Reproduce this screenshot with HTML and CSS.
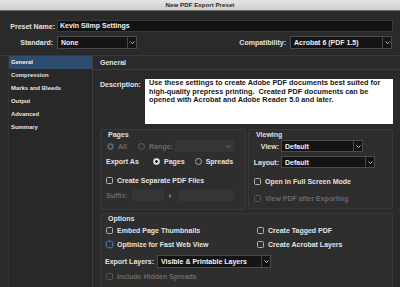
FILE: index.html
```html
<!DOCTYPE html>
<html>
<head>
<meta charset="utf-8">
<title>New PDF Export Preset</title>
<link rel="stylesheet" href="styles.css">
</head>
<body>
<div class="titlebar">New PDF Export Preset</div>
<div class="row preset-row">
  <span class="lbl-left">Preset Name:</span>
  <div class="input">Kevin Slimp Settings</div>
</div>
<div class="row std-row">
  <span class="lbl-left std">Standard:</span>
  <div class="select w-standard"><span class="val">None</span><span class="chev"><svg width="5" height="3" viewBox="0 0 5 3"><path d="M0.5 0.5 L2.5 2.5 L4.5 0.5" fill="none" stroke="#cfcfcf" stroke-width="0.9"/></svg></span></div>
  <div class="spacer"></div>
  <span class="lbl-compat">Compatibility:</span>
  <div class="select w-compat"><span class="val">Acrobat 6 (PDF 1.5)</span><span class="chev"><svg width="5" height="3" viewBox="0 0 5 3"><path d="M0.5 0.5 L2.5 2.5 L4.5 0.5" fill="none" stroke="#cfcfcf" stroke-width="0.9"/></svg></span></div>
</div>
<div class="body">
  <ul class="sidebar">
    <li class="active">General</li>
    <li>Compression</li>
    <li>Marks and Bleeds</li>
    <li>Output</li>
    <li>Advanced</li>
    <li>Summary</li>
  </ul>
  <div class="panel">
    <div class="panel-head">General</div>
    <div class="panel-content">
      <div class="desc-row">
        <span class="desc-lbl">Description:</span>
        <div class="textarea">Use these settings to create Adobe PDF documents best suited for<br>high-quality prepress printing.&nbsp; Created PDF documents can be<br>opened with Acrobat and Adobe Reader 5.0 and later.</div>
      </div>
      <div class="groups">
        <div class="group pages">
          <div class="legend">Pages</div>
          <div class="row r-range">
            <span class="radio dis on"></span><span class="opt dis">All</span>
            <span class="radio dis gap-range"></span><span class="opt dis">Range:</span>
            <div class="select dis w-range"><span class="val"></span><span class="chev"><svg width="5" height="3" viewBox="0 0 5 3"><path d="M0.5 0.5 L2.5 2.5 L4.5 0.5" fill="none" stroke="#7a7a7a" stroke-width="0.9"/></svg></span></div>
          </div>
          <div class="row r-export">
            <span class="export-lbl">Export As</span>
            <span class="radio on"></span><span class="opt">Pages</span>
            <span class="radio gap-spreads"></span><span class="opt">Spreads</span>
          </div>
          <div class="row r-check r-create">
            <span class="check"></span><span class="opt">Create Separate PDF Files</span>
          </div>
          <div class="row r-suffix">
            <span class="suffix-lbl dis">Suffix:</span>
            <div class="dis-input w-suf1"></div>
            <svg class="arrow" width="3" height="4" viewBox="0 0 3 4"><path d="M0 0 L3 2 L0 4 Z" fill="#777"/></svg>
            <div class="dis-input w-suf2"></div>
          </div>
        </div>
        <div class="group viewing">
          <div class="legend">Viewing</div>
          <div class="row r-view">
            <span class="view-lbl">View:</span>
            <div class="select w-view"><span class="val">Default</span><span class="chev"><svg width="5" height="3" viewBox="0 0 5 3"><path d="M0.5 0.5 L2.5 2.5 L4.5 0.5" fill="none" stroke="#cfcfcf" stroke-width="0.9"/></svg></span></div>
          </div>
          <div class="row r-layout">
            <span class="view-lbl">Layout:</span>
            <div class="select w-layout"><span class="val">Default</span><span class="chev"><svg width="5" height="3" viewBox="0 0 5 3"><path d="M0.5 0.5 L2.5 2.5 L4.5 0.5" fill="none" stroke="#cfcfcf" stroke-width="0.9"/></svg></span></div>
          </div>
          <div class="row r-check r-full">
            <span class="check"></span><span class="opt">Open in Full Screen Mode</span>
          </div>
          <div class="row r-check r-after">
            <span class="check dis"></span><span class="opt dis">View PDF after Exporting</span>
          </div>
        </div>
      </div>
      <div class="group options">
        <div class="legend">Options</div>
        <div class="opt-grid">
          <div class="row r-check"><span class="check"></span><span class="opt">Embed Page Thumbnails</span></div>
          <div class="row r-check"><span class="check"></span><span class="opt">Create Tagged PDF</span></div>
          <div class="row r-check"><span class="check focus"></span><span class="opt">Optimize for Fast Web View</span></div>
          <div class="row r-check"><span class="check"></span><span class="opt">Create Acrobat Layers</span></div>
        </div>
        <div class="row r-layers">
          <span class="layers-lbl">Export Layers:</span>
          <div class="select w-layers"><span class="val">Visible &amp; Printable Layers</span><span class="chev"><svg width="5" height="3" viewBox="0 0 5 3"><path d="M0.5 0.5 L2.5 2.5 L4.5 0.5" fill="none" stroke="#cfcfcf" stroke-width="0.9"/></svg></span></div>
        </div>
        <div class="row r-check r-hidden">
          <span class="check dis"></span><span class="opt dis">Include Hidden Spreads</span>
        </div>
      </div>
    </div>
  </div>
</div>
</body>
</html>
```

FILE: styles.css
```css
* { box-sizing: border-box; }
html, body { margin: 0; padding: 0; }
body {
  width: 400px;
  height: 287px;
  overflow: hidden;
  display: flex;
  flex-direction: column;
  background: #2a2a2a;
  color: #e2e2e2;
  font-family: "Liberation Sans", Arial, sans-serif;
  font-size: 7px;
  font-weight: bold;
  line-height: 1;
}

.titlebar {
  height: 11px;
  flex: none;
  background: linear-gradient(#e4e4e4, #cfcfcf);
  border-bottom: 1px solid #6e6e6e;
  color: #2a2a2a;
  font-size: 6.2px;
  line-height: 10px;
  text-align: center;
}

.row { display: flex; align-items: center; flex: none; }

.preset-row { margin-top: 9px; height: 12px; padding-right: 7px; }
.lbl-left { width: 57px; text-align: right; padding-right: 2px; }
.lbl-left.std { padding-right: 4px; }
.input {
  flex: 1;
  height: 12px;
  background: #121212;
  border: 1px solid #3a3a3a;
  padding-left: 2px;
  line-height: 10px;
  color: #f0f0f0;
}

.std-row { margin-top: 4px; height: 13px; padding-right: 8px; }
.spacer { flex: 1; }
.lbl-compat { margin-right: 4px; }

.select {
  display: flex;
  height: 13px;
  background: #141414;
  border: 1px solid #4a4a4a;
  color: #f0f0f0;
}
.select .val { flex: 1; padding-left: 3px; line-height: 11px; white-space: nowrap; overflow: hidden; }
.select .chev {
  width: 9px;
  border-left: 1px solid #464646;
  display: flex;
  align-items: center;
  justify-content: center;
}
.select .chev svg { display: block; }
.w-standard { width: 80px; }
.w-compat { width: 102px; }
.w-range { width: 59px; height: 12px; margin-left: 2px; }
.w-view { width: 82px; height: 12px; }
.w-layout { width: 94px; height: 12px; }
.w-layers { width: 114px; height: 13px; }

.select.dis { background: #363636; border-color: #363636; }
.select.dis .chev { border-left-color: #363636; }

.body {
  flex: 1;
  min-height: 0;
  display: flex;
  margin-top: 6px;
  border-top: 1px solid #3a3a3a;
  overflow: hidden;
}

.sidebar {
  list-style: none;
  margin: 0 0 0 8px;
  padding: 0;
  width: 85px;
  background: #282828;
  border-left: 1px solid #343434;
  border-right: 1px solid #3c3c3c;
  font-size: 5.9px;
}
.sidebar li { height: 13px; line-height: 13px; padding-left: 2px; color: #e6e6e6; }
.sidebar li.active { background: #2d4c6f; color: #f4f4f4; }

.panel { flex: 1; display: flex; flex-direction: column; min-width: 0; }
.panel-head {
  height: 14px;
  flex: none;
  line-height: 13px;
  padding-left: 7px;
  border-bottom: 1px solid #3c3c3c;
}
.panel-content { padding: 9px 7px 0 7px; }

.desc-row { display: flex; align-items: flex-start; }
.desc-lbl { width: 45px; line-height: 9px; margin-top: 1px; }
.textarea {
  flex: 1;
  height: 45px;
  background: #ffffff;
  color: #161616;
  font-size: 7.3px;
  line-height: 8.5px;
  padding: 0 4px;
  white-space: nowrap;
}

.groups { display: flex; gap: 2px; margin-top: 5px; height: 81px; }
.group {
  border: 1px solid #393939;
  background: #2e2e2e;
  border-radius: 2px;
  padding: 0 4px;
}
.pages { width: 146px; flex: none; }
.viewing { flex: 1; height: 80px; }
.legend { height: 9px; line-height: 9px; margin-left: 3px; color: #e0e0e0; }

.dis { color: #686868; }

.radio {
  width: 7px;
  height: 7px;
  border-radius: 50%;
  border: 1px solid #a8a8a8;
  flex: none;
  margin-left: 2px;
}
.radio.on { border-color: #e6e6e6; background: radial-gradient(circle, #262626 1.1px, #e6e6e6 1.6px); }
.radio.dis { border-color: #626262; }
.radio.dis.on { background: radial-gradient(circle, #2e2e2e 1.1px, #626262 1.6px); }
.opt { margin-left: 4px; white-space: nowrap; }
.gap-range { margin-left: 11px; }

.r-range { height: 12px; margin-top: 1px; }
.r-export { height: 12px; margin-top: 3px; }
.export-lbl { width: 47px; margin-left: 1px; }
.r-export .radio { margin-left: 0; }
.r-export .gap-spreads { margin-left: 10px; }

.check {
  width: 7px;
  height: 7px;
  border: 1px solid #b0b0b0;
  border-radius: 1.5px;
  flex: none;
  margin-left: 1px;
}
.check.dis { border-color: #555; }
.check.focus { border-color: #3d6fa6; box-shadow: 0 0 0 0.5px #2c5585; }

.r-check { height: 10px; }
.r-create { margin-top: 8px; }
.r-suffix { height: 11px; margin-top: 5px; }
.suffix-lbl { width: 26px; margin-left: 1px; }
.dis-input { height: 11px; background: #363636; border-radius: 1px; }
.w-suf1 { width: 32px; }
.w-suf2 { width: 56px; }
.arrow { margin: 0 6px 0 5px; display: block; }

.r-view { height: 12px; margin-top: 1px; }
.r-layout { height: 12px; margin-top: 4px; }
.view-lbl { width: 26px; text-align: right; margin-right: 2px; }
.r-full { margin-top: 8px; }
.r-after { margin-top: 7px; }

.options { margin-top: 3px; height: 74px; border-bottom: 0; border-radius: 2px 2px 0 0; }
.opt-grid { display: grid; grid-template-columns: 151px auto; row-gap: 4px; margin-top: 2px; }
.r-layers { height: 13px; margin-top: 6px; }
.layers-lbl { width: 52px; }
.r-hidden { margin-top: 3px; }
```
